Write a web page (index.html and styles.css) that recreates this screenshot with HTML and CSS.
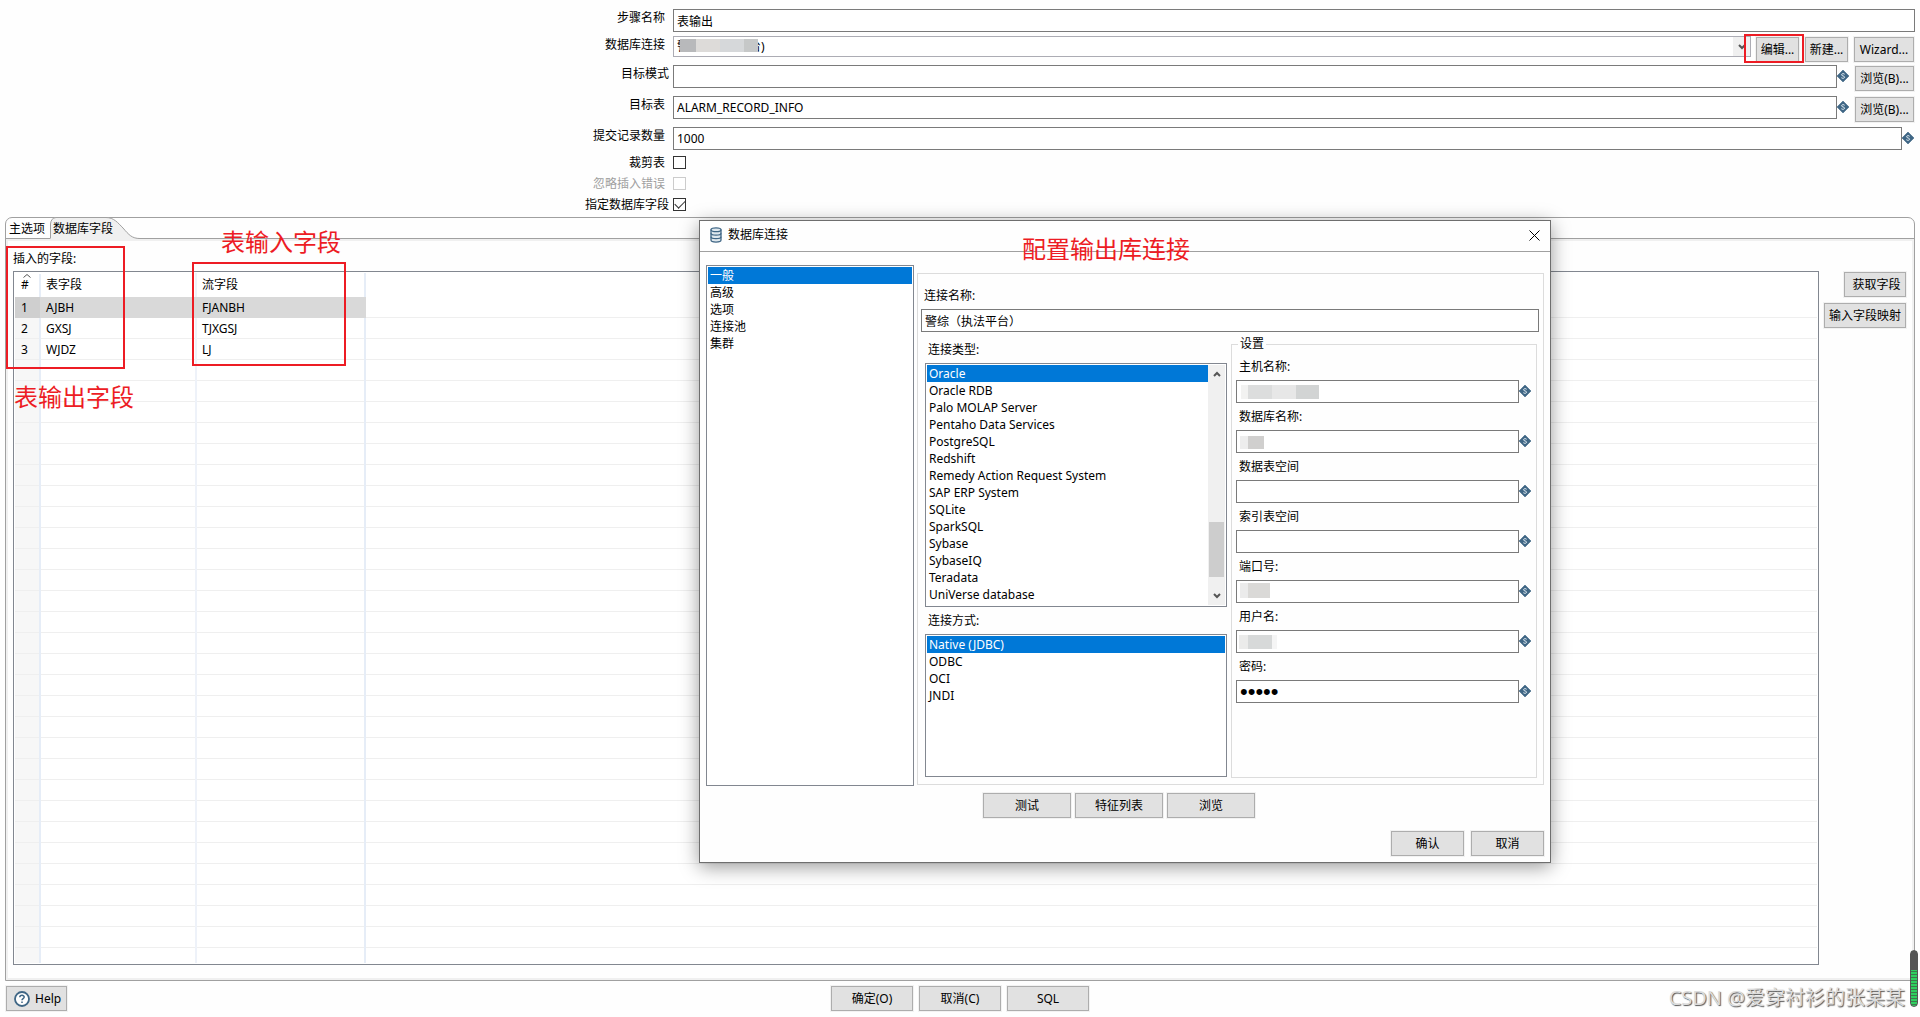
FILE: index.html
```html
<!DOCTYPE html>
<html lang="zh-CN">
<head>
<meta charset="utf-8">
<title>表输出</title>
<link rel="stylesheet" href="styles.css">
</head>
<body>
<svg class="defs" aria-hidden="true">
  <symbol id="var" viewBox="0 0 12 12">
    <path d="M6 0 12 6 6 12 0 6Z" fill="#3f6685" stroke="#3f6685" stroke-width=".6"/>
    <path d="M7.700 4.300C7.200 3.400 4.500 3.300 4.500 4.800 4.500 6.200 7.600 5.600 7.600 7.200 7.600 8.700 4.900 8.500 4.300 7.700" fill="none" stroke="#dbe6ee" stroke-width="1"/>
  </symbol>
  <symbol id="up" viewBox="0 0 8 6"><path d="M1 5 4 2 7 5" fill="none" stroke="#555" stroke-width="2"/></symbol>
  <symbol id="down" viewBox="0 0 8 6"><path d="M1 1 4 4 7 1" fill="none" stroke="#555" stroke-width="2"/></symbol>
</svg>

<form class="step">
  <div class="row r27"><label for="name">步骤名称</label><div class="ctl"><input id="name" class="text" value="表输出"></div></div>
  <div class="row r29"><label for="conn">数据库连接</label>
    <div class="ctl btns">
      <div class="combo">
        <select id="conn"><option>警综（执法平台)</option></select>
        <span class="mosaic m-conn"></span>
        <span class="drop"><svg><use href="#down"/></svg></span>
      </div>
      <button type="button" class="btn w43">编辑...</button>
      <button type="button" class="btn w43 gap">新建...</button>
      <button type="button" class="btn w60 gap">Wizard...</button>
    </div>
  </div>
  <div class="row r31"><label for="schema" class="near">目标模式</label>
    <div class="ctl btns"><input id="schema" class="text"><svg class="var"><use href="#var"/></svg><button type="button" class="btn w59 gap">浏览(B)...</button></div></div>
  <div class="row r31"><label for="table">目标表</label>
    <div class="ctl btns"><input id="table" class="text" value="ALARM_RECORD_INFO"><svg class="var"><use href="#var"/></svg><button type="button" class="btn w59 gap">浏览(B)...</button></div></div>
  <div class="row r29"><label for="commit">提交记录数量</label>
    <div class="ctl btns"><input id="commit" class="text" value="1000"><svg class="var"><use href="#var"/></svg></div></div>
  <div class="row check"><label for="trunc">裁剪表</label><div class="ctl"><input id="trunc" type="checkbox"></div></div>
  <div class="row check off"><label for="ignore">忽略插入错误</label><div class="ctl"><input id="ignore" type="checkbox" disabled></div></div>
  <div class="row check"><label for="spec" class="near">指定数据库字段</label><div class="ctl"><input id="spec" type="checkbox" checked></div></div>
</form>

<main class="folder">
  <div class="tabs" role="tablist">
    <button type="button" role="tab" class="tab">主选项</button>
    <button type="button" role="tab" class="tab active" aria-selected="true">
      <svg viewBox="0 0 90 22"><path d="M0 22V7Q1 1 6 .5H56C64 .5 68 6 73 11 79 18 82 21.500 90 21.500V22Z" fill="#f0f0f0"/><path d="M.5 21.500V7Q1 1 6 .5H56C64 .5 68 6 73 11 79 18 82 21.500 90 21.500" fill="none" stroke="#a0a0a0"/></svg>
      <span>数据库字段</span>
    </button>
  </div>
  <div class="pane">
    <div class="caption">插入的字段:</div>
    <div class="fields">
      <div class="gridbox">
        <table>
          <colgroup><col class="c1"><col class="c2"><col class="c3"></colgroup>
          <thead><tr><th class="sort"><svg viewBox="0 0 8 4"><path d="M.5 3.500 4 .5 7.500 3.500" fill="none" stroke="#555"/></svg>#</th><th>表字段</th><th>流字段</th></tr></thead>
          <tbody>
            <tr class="sel"><td>1</td><td>AJBH</td><td>FJANBH</td></tr>
            <tr><td>2</td><td>GXSJ</td><td>TJXGSJ</td></tr>
            <tr><td>3</td><td>WJDZ</td><td>LJ</td></tr>
          </tbody>
        </table>
      </div>
      <div class="side">
        <button type="button" class="btn w62">获取字段</button>
        <button type="button" class="btn w82">输入字段映射</button>
      </div>
    </div>
  </div>
</main>

<footer class="foot">
  <button type="button" class="btn help"><svg viewBox="0 0 16 16"><circle cx="8" cy="8" r="7" fill="#fff" stroke="#3f6685" stroke-width="1.800"/><path d="M5.800 6.300C5.900 3.700 10.200 3.800 10.200 6.100 10.200 7.600 8 7.600 8 9.300M8 10.500V12" fill="none" stroke="#3f6685" stroke-width="1.500"/></svg>Help</button>
  <div class="actions">
    <button type="button" class="btn w82">确定(O)</button>
    <button type="button" class="btn w82">取消(C)</button>
    <button type="button" class="btn w82">SQL</button>
  </div>
</footer>

<section class="dialog" role="dialog" aria-labelledby="dlg-title">
  <header class="title">
    <svg class="db" viewBox="0 0 12 16"><g fill="#dfe8ee" stroke="#3f6685" stroke-width="1.300"><path d="M1 2.500V13C1 15.800 11 15.800 11 13V2.500"/><ellipse cx="6" cy="2.700" rx="5" ry="1.900"/><path d="M1 6.200C1 8.700 11 8.700 11 6.200M1 9.800C1 12.300 11 12.300 11 9.800" fill="none"/></g></svg>
    <h1 id="dlg-title">数据库连接</h1>
    <button type="button" class="close" aria-label="关闭"><svg viewBox="0 0 11 11"><path d="M.5.5 10.500 10.500M10.500.5.5 10.500" stroke="#000" fill="none"/></svg></button>
  </header>
  <div class="work">
    <ul class="list nav" role="listbox" aria-label="分类">
      <li class="on" role="option" aria-selected="true">一般</li><li role="option">高级</li><li role="option">选项</li><li role="option">连接池</li><li role="option">集群</li>
    </ul>
    <div class="panel">
      <label for="cname" class="lbl">连接名称:</label>
      <input id="cname" class="text" value="警综（执法平台）">
      <div class="cols">
        <div class="left">
          <div class="lbl" id="l-type">连接类型:</div>
          <div class="list types">
            <ul role="listbox" aria-labelledby="l-type">
              <li class="on" role="option" aria-selected="true">Oracle</li><li role="option">Oracle RDB</li><li role="option">Palo MOLAP Server</li><li role="option">Pentaho Data Services</li><li role="option">PostgreSQL</li><li role="option">Redshift</li><li role="option">Remedy Action Request System</li><li role="option">SAP ERP System</li><li role="option">SQLite</li><li role="option">SparkSQL</li><li role="option">Sybase</li><li role="option">SybaseIQ</li><li role="option">Teradata</li><li role="option">UniVerse database</li>
            </ul>
            <div class="scroll"><svg><use href="#up"/></svg><span class="thumb"></span><svg><use href="#down"/></svg></div>
          </div>
          <div class="lbl" id="l-mode">连接方式:</div>
          <ul class="list modes" role="listbox" aria-labelledby="l-mode">
            <li class="on" role="option" aria-selected="true">Native (JDBC)</li><li role="option">ODBC</li><li role="option">OCI</li><li role="option">JNDI</li>
          </ul>
        </div>
        <fieldset>
          <legend>设置</legend>
          <div class="field"><label for="host">主机名称:</label><div><input id="host" class="text"><span class="mosaic m-host"></span><svg class="var"><use href="#var"/></svg></div></div>
          <div class="field"><label for="dbn">数据库名称:</label><div><input id="dbn" class="text"><span class="mosaic m-db"></span><svg class="var"><use href="#var"/></svg></div></div>
          <div class="field"><label for="dts">数据表空间</label><div><input id="dts" class="text"><svg class="var"><use href="#var"/></svg></div></div>
          <div class="field"><label for="its">索引表空间</label><div><input id="its" class="text"><svg class="var"><use href="#var"/></svg></div></div>
          <div class="field"><label for="port">端口号:</label><div><input id="port" class="text"><span class="mosaic m-port"></span><svg class="var"><use href="#var"/></svg></div></div>
          <div class="field"><label for="user">用户名:</label><div><input id="user" class="text"><span class="mosaic m-user"></span><svg class="var"><use href="#var"/></svg></div></div>
          <div class="field"><label for="pass">密码:</label><div><input id="pass" type="password" class="text" value="abcde"><svg class="var"><use href="#var"/></svg></div></div>
        </fieldset>
      </div>
    </div>
  </div>
  <div class="tools">
    <button type="button" class="btn w88">测试</button>
    <button type="button" class="btn w88">特征列表</button>
    <button type="button" class="btn w88">浏览</button>
  </div>
  <div class="confirm">
    <button type="button" class="btn w73">确认</button>
    <button type="button" class="btn w73">取消</button>
  </div>
</section>

<div class="frame f-edit"></div>
<div class="frame f-out"></div>
<div class="frame f-in"></div>
<div class="note n-in">表输入字段</div>
<div class="note n-out">表输出字段</div>
<div class="note n-cfg">配置输出库连接</div>
<div class="meter"></div>
<div class="mark">CSDN @爱穿衬衫的张某某</div>
</body>
</html>
```

FILE: styles.css
```css
* { box-sizing: border-box; }
body {
  margin: 0;
  min-height: 100vh;
  position: relative;
  display: flex;
  flex-direction: column;
  background: #fefefe;
  color: #000;
  font: 12px/16px "Noto Sans", "Noto Sans CJK SC", sans-serif;
  overflow-x: hidden;
}
input, select, button { font: inherit; color: inherit; margin: 0; }
ul { list-style: none; margin: 0; padding: 0; }
.defs { position: absolute; width: 0; height: 0; }

.text {
  display: block;
  width: 100%;
  min-width: 0;
  height: 23px;
  padding: 0 3px;
  border: 1px solid #7a7a7a;
  border-radius: 0;
  background: #fff;
  outline: 0;
}
.btn {
  flex: none;
  height: 25px;
  padding: 0;
  border: 1px solid #adadad;
  border-radius: 0;
  background: #e1e1e1;
  box-shadow: 0 0 0 1px #f2f2f2;
  white-space: nowrap;
}
.w43 { width: 43px; }
.w59 { width: 59px; }
.w60 { width: 60px; }
.w62 { width: 62px; }
.w73 { width: 73px; }
.w82 { width: 82px; }
.w88 { width: 88px; }
.var { flex: none; width: 12px; height: 12px; margin-top: 5px; }

/* step settings */
.step { padding: 9px 5px 0 0; height: 217px; }
.row { display: grid; grid-template-columns: calc(35vw + 1px) 1fr; }
.row > label { text-align: right; padding-right: 8px; line-height: 18px; }
.row > label.near { padding-right: 4px; }
.r27 { height: 27px; }
.r29 { height: 29px; }
.r31 { height: 31px; }
.check { height: 21px; }
.check > label { line-height: 14px; }
.off { color: #a0a0a0; }
.btns { display: flex; align-items: flex-start; padding-right: 1px; }
.btns .btn { margin-top: 1px; }
.btns .gap { margin-left: 6px; }
.combo { flex: 1; position: relative; margin-right: 5px; }
.combo select {
  display: block;
  width: 100%;
  height: 21px;
  padding: 0 3px;
  appearance: none;
  border: 1px solid #acacb4;
  border-radius: 0;
  background: #fff;
}
.drop { position: absolute; right: 1px; top: 1px; width: 17px; height: 19px; background: #f0f0f0; display: grid; place-items: center; }
.drop svg, .scroll svg { width: 8px; height: 6px; }
input[type="checkbox"] {
  display: block;
  appearance: none;
  width: 13px;
  height: 13px;
  border: 1px solid #333;
  background: #fff;
}
input[type="checkbox"]:disabled { border-color: #ccc; }
input[type="checkbox"]:checked::before {
  content: "";
  display: block;
  width: 9px;
  height: 5px;
  margin: 1px;
  border: solid #333;
  border-width: 0 0 1px 1px;
  transform: rotate(-45deg);
}

.mosaic { position: absolute; }
.m-conn { left: 7px; top: 3px; width: 78px; height: 13px; background: linear-gradient(90deg, #b8b9bb 16px, #dddbd9 16px 40px, #d6d8da 40px 64px, #c6c8c8 64px); }
.m-host { left: 5px; top: 5px; width: 78px; height: 14px; background: linear-gradient(90deg, #f2f2f1 7px, #dcdddd 7px 31px, #e7e7e7 31px 55px, #d2d4d4 55px); }
.m-db { left: 4px; top: 6px; width: 24px; height: 13px; background: linear-gradient(90deg, #ededed 8px, #d0cfce 8px); }
.m-port { left: 4px; top: 3px; width: 30px; height: 15px; background: linear-gradient(90deg, #ebebeb 8px, #dad9d7 8px); }
.m-user { left: 3px; top: 5px; width: 38px; height: 14px; background: linear-gradient(90deg, #ebebea 9px, #d7d9d9 9px 33px, #f5f5f5 33px); }

/* tab folder */
.folder {
  flex: 1;
  display: flex;
  flex-direction: column;
  margin: 0 5px 5px;
  border: 1px solid #a0a0a0;
  border-radius: 7px 7px 0 0;
}
.tabs { display: flex; height: 21px; border-bottom: 1px solid #a0a0a0; }
.tab { position: relative; border: 0; padding: 0 3px; background: none; height: 21px; line-height: 21px; }
.tab:first-child { width: 44px; padding: 0 0 0 3px; text-align: left; }
.tab svg { position: absolute; left: 0; top: -1px; width: 90px; height: 22px; }
.tab span { position: relative; }
.pane {
  flex: 1;
  display: flex;
  flex-direction: column;
  border: 2px solid #f0f0f0;
  padding: 10px 6px 13px 5px;
}
.caption { height: 20px; }
.fields { flex: 1; display: flex; gap: 5px; }
.gridbox {
  flex: 1;
  border: 1px solid #828790;
  padding: 1px;
  background:
    linear-gradient(#e6edf7, #e6edf7) 24px 1px / 2px 100% no-repeat content-box,
    linear-gradient(#eef2f9, #eef2f9) 180px 0 / 2px 100% no-repeat content-box,
    linear-gradient(#e6edf7, #e6edf7) 349px 0 / 2px 100% no-repeat content-box,
    repeating-linear-gradient(transparent 0 20px, #efefef 20px 21px) 0 24px / 100% 100% no-repeat content-box,
    linear-gradient(#f7f7f7, #f7f7f7) 0 24px / 25px 100% no-repeat content-box,
    #fff;
}
table { border-collapse: collapse; table-layout: fixed; width: 351px; }
.c1 { width: 25px; }
.c2 { width: 157px; }
.c3 { width: 169px; }
th, td { padding: 0 0 0 6px; text-align: left; font-weight: 400; height: 21px; }
th { height: 24px; position: relative; }
th:nth-child(3), td:nth-child(3) { padding-left: 5px; }
.sort svg { position: absolute; left: 8px; top: 1px; width: 8px; height: 4px; }
.sel td { background: #d9d9d9; }
.sel td:first-child { background: #cfcfcf; }
.side { display: flex; flex-direction: column; align-items: flex-end; gap: 6px; padding-top: 1px; width: 82px; }
.side .w62 { padding-left: 3px; }

.foot { display: grid; grid-template-columns: 1fr auto 1fr; padding: 0 6px 6px; }
.help { width: 61px; display: flex; align-items: center; gap: 5px; padding-left: 7px; }
.help svg { width: 16px; height: 16px; }
.actions { display: flex; gap: 6px; }

/* connection dialog */
.dialog {
  position: absolute;
  left: 699px;
  top: 220px;
  width: 852px;
  border: 1px solid #6e6e6e;
  background: #fefefe;
  box-shadow: 0 4px 18px rgba(0, 0, 0, .4);
}
.title { display: flex; align-items: center; height: 31px; padding: 0 10px 2px; border-bottom: 1px solid #a0a0a0; }
.db { width: 12px; height: 16px; }
.title h1 { flex: 1; margin: 0 0 0 6px; font-size: 12px; font-weight: 400; }
.close { border: 0; padding: 0; background: none; width: 11px; height: 11px; }
.close svg { display: block; width: 11px; height: 11px; }
.work { display: grid; grid-template-columns: 208px 1fr; gap: 3px; padding: 13px 6px 0; }
.list { border: 1px solid #828790; padding: 1px; background: #fff; }
.list li { height: 17px; line-height: 17px; padding-left: 2px; white-space: nowrap; }
.list .on { background: #0078d7; color: #fff; }
.nav { height: 521px; }
.panel { margin: 8px 0 1px; border: 1px solid #dcdcdc; padding: 14px 4px 0 3px; }
.lbl { display: block; padding-left: 3px; }
.panel > .lbl { margin-bottom: 5px; }
.cols { display: grid; grid-template-columns: 302px 1fr; gap: 4px; margin: 4px 2px 0 4px; }
.left { padding-top: 6px; }
.types { display: flex; height: 244px; margin: 5px 0 6px; }
.types ul { flex: 1; }
.scroll { width: 17px; background: #f0f0f0; display: flex; flex-direction: column; align-items: center; padding: 6px 0; }
.thumb { width: 15px; height: 55px; margin: auto 0 16px; background: #cdcdcd; }
.modes { height: 143px; margin-top: 5px; }
fieldset { margin: 0; min-width: 0; height: 442px; border: 1px solid #dcdcdc; padding: 7px 5px 0 4px; }
legend { padding: 0 2px; margin-left: 2px; }
.field { margin-bottom: 6px; }
.field label { display: block; padding-left: 3px; margin-bottom: 5px; }
.field > div { display: flex; position: relative; }
#pass { font-family: "Liberation Sans", sans-serif; font-size: 22px; }
.tools { display: flex; justify-content: center; gap: 4px; padding: 7px 12px 13px 0; }
.confirm { display: flex; justify-content: flex-end; gap: 7px; padding: 0 6px 6px; }

/* annotations drawn over the windows */
.frame { position: absolute; border: 2px solid #ed1c24; }
.f-edit { right: 116px; top: 34px; width: 60px; height: 29px; }
.f-out { left: 6px; top: 246px; width: 119px; height: 123px; }
.f-in { left: 192px; top: 262px; width: 154px; height: 104px; }
.note { position: absolute; color: #ed1c24; font-size: 24px; line-height: 32px; white-space: nowrap; }
.n-in { left: 221px; top: 226px; }
.n-out { left: 14px; top: 381px; }
.n-cfg { left: 1022px; top: 233px; }
.meter {
  position: absolute;
  right: 2px;
  bottom: 10px;
  width: 8px;
  height: 57px;
  border: 1px solid #555;
  border-radius: 4px;
  background: linear-gradient(#555 19px, transparent 19px), repeating-linear-gradient(#2fd060 0 2px, #3c7a4c 2px 3px);
}
.mark {
  position: absolute;
  right: 15px;
  bottom: 5px;
  font-family: "Open Sans", "Noto Sans CJK SC", sans-serif;
  font-size: 20px;
  line-height: 28px;
  color: #dcdcdc;
  text-shadow: 1px 1px 1px #555;
  white-space: nowrap;
}
```
